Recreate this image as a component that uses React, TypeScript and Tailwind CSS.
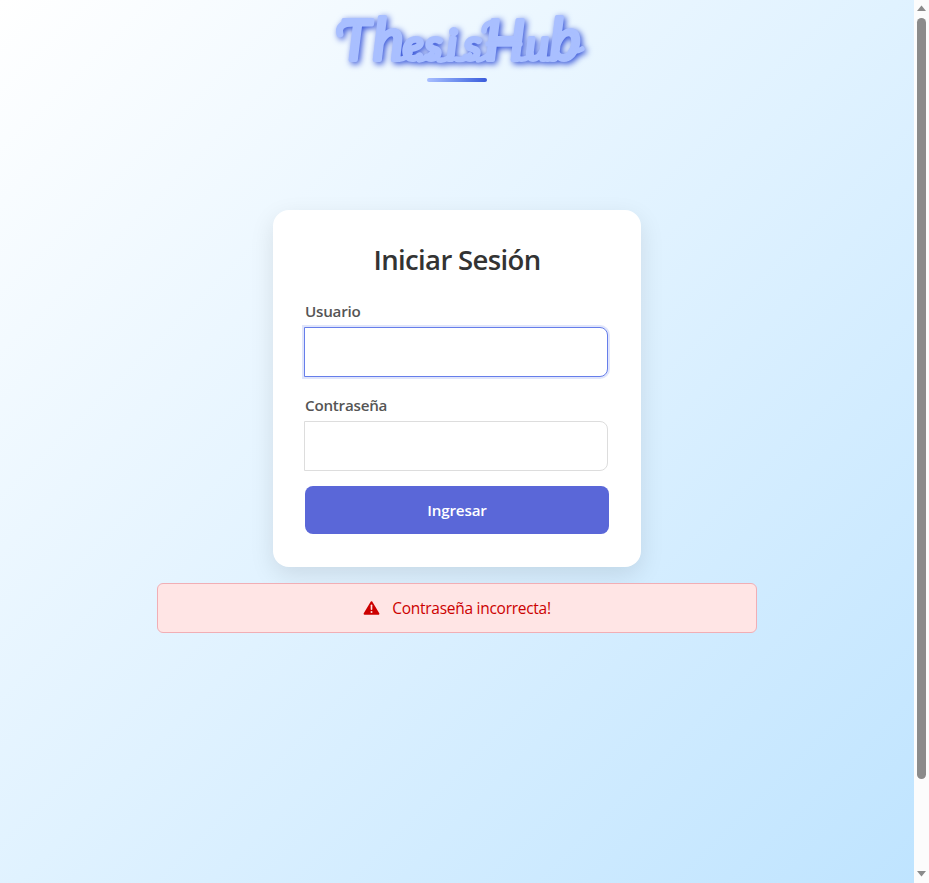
import React from "react";

function Field({ label, type, active }: { label: string; type: string; active?: boolean }) {
  return (
    <label className="block h-[94px]">
      <span className="block h-[26px] text-[15.2px] leading-5 font-[580] tracking-[-0.24px] text-[#555]">{label}</span>
      <input
        type={type}
        className={
          "-ml-px block h-[50px] w-[304px] rounded-r-lg border bg-white px-3 outline-none " +
          (active ? "border-[#667eea] shadow-[0_0_0_2px_rgba(102,126,234,0.2)]" : "border-[#ddd]")
        }
      />
    </label>
  );
}

function Logo() {
  return (
    <header className="flex h-[82px] w-full flex-col items-center">
      <svg width="280" height="78" viewBox="0 0 280 78" className="shrink-0 overflow-visible [filter:drop-shadow(2px_2px_3px_rgba(50,80,215,1))]">
        <text
          y="60"
          fill="#a9bfff"
          stroke="#a9bfff"
          strokeWidth="4"
          strokeLinejoin="round"
          strokeLinecap="round"
          fontFamily="Lato, sans-serif"
          fontStyle="italic"
          fontWeight="400"
          fontSize="43"
        >
          <tspan x="23" fontSize="56">T</tspan>
          <tspan x="56" fontSize="58">h</tspan>
          <tspan x="86 108 130 147">esis</tspan>
          <tspan x="168" fontSize="56">H</tspan>
          <tspan x="209">u</tspan>
          <tspan x="233" fontSize="58">b</tspan>
        </text>
        {/* swashes that lead into and out of the letters */}
        <g fill="none" stroke="#a9bfff" strokeWidth="5.5" strokeLinecap="round">
          <path d="M34 23Q20 24 23 34" strokeWidth="7" />
          <path d="M81 59Q88 60 93 53M102 60Q110 59 115 53M122 60Q130 61 135 54M139 59Q147 61 153 55M161 60Q168 59 173 53" />
          <path d="M178 22Q167 23 167 31M171 44H203M203 59Q210 60 214 54M229 59Q236 60 241 54" />
          <path d="M254 51Q260 52 265 49" />
        </g>
      </svg>
      <div className="h-1 w-[60px] shrink-0 rounded-sm bg-linear-to-r from-[#a9bfff] to-[#3b5bdb]" />
    </header>
  );
}

function Scrollbar() {
  return (
    <div className="flex h-full w-[15px] shrink-0 flex-col items-center bg-[#fcfcfc]">
      <svg width="15" height="17" viewBox="0 0 15 17"><path d="M3 11 7.5 5.5 12 11Z" fill="#8b8b8b" /></svg>
      <div className="mt-px h-[761px] w-[9px] rounded-full bg-[#8b8b8b]" />
      <svg className="mt-auto" width="15" height="17" viewBox="0 0 15 17"><path d="M3 5h9l-4.5 5.5Z" fill="#8b8b8b" /></svg>
    </div>
  );
}

export default function App() {
  return (
    <div className="flex h-[883px] w-[929px] overflow-hidden font-['Open_Sans','Noto_Sans',sans-serif]">
      <main className="flex h-full w-[914px] flex-col items-center bg-[linear-gradient(135deg,#ffffff_0%,#e0f2ff_50%,#bfe4ff_100%)]">
        <Logo />
        <section className="mt-32 h-[357px] w-[368px] shrink-0 rounded-2xl bg-white px-8 pt-8 shadow-[0_8px_24px_rgba(0,0,0,0.1)]">
          <h1 className="mb-[17px] h-[42px] text-center text-[27.5px] leading-9 font-[560] tracking-[-0.65px] text-[#333]">Iniciar Sesión</h1>
          <Field label="Usuario" type="text" active />
          <Field label="Contraseña" type="password" />
          <button className="-mt-[3px] block h-12 w-full rounded-lg bg-[#5a67d8] text-[15.2px] font-semibold tracking-[-0.15px] text-white">Ingresar</button>
        </section>
        <div role="alert" className="mt-4 flex h-[50px] w-[600px] shrink-0 items-center justify-center gap-3 rounded-md border border-[#f1aeb5] bg-[#ffe5e5] text-[15.5px] tracking-[-0.27px] text-[#cc0000]">
          <svg width="17" height="16" viewBox="0 0 17 16">
            <path d="M8.5 2.2 15.4 13.8H1.6Z" fill="#cc0000" stroke="#cc0000" strokeWidth="2" strokeLinejoin="round" />
            <path d="M8.5 5.3v4" stroke="#ffe5e5" strokeWidth="1.6" strokeLinecap="round" />
            <circle cx="8.5" cy="11.9" r="1" fill="#ffe5e5" />
          </svg>
          <span className="pt-0.5">Contraseña incorrecta!</span>
        </div>
      </main>
      <Scrollbar />
    </div>
  );
}
